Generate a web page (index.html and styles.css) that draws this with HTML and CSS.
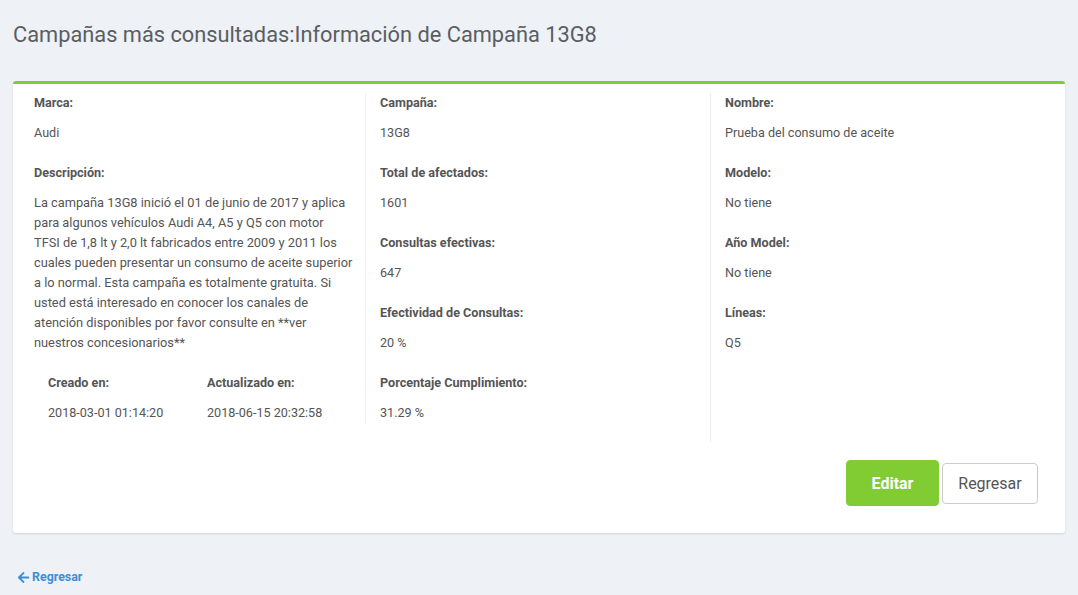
FILE: index.html
```html
<!DOCTYPE html>
<html lang="es">
<head>
<meta charset="utf-8">
<title>Información de Campaña 13G8</title>
<link rel="stylesheet" href="styles.css">
</head>
<body>
<div class="page">
  <h1 class="page-title">Campañas más consultadas:Información de Campaña 13G8</h1>
  <div class="card">
    <div class="row">
      <div class="col col-1">
        <div class="field">
          <div class="label">Marca:</div>
          <div class="value">Audi</div>
        </div>
        <div class="field">
          <div class="label">Descripción:</div>
          <div class="value description">La campaña 13G8 inició el 01 de junio de 2017 y aplica<br>
para algunos vehículos Audi A4, A5 y Q5 con motor<br>
TFSI de 1,8 lt y 2,0 lt fabricados entre 2009 y 2011 los<br>
cuales pueden presentar un consumo de aceite superior<br>
a lo normal. Esta campaña es totalmente gratuita. Si<br>
usted está interesado en conocer los canales de<br>
atención disponibles por favor consulte en **ver<br>
nuestros concesionarios**</div>
        </div>
        <div class="subrow">
          <div class="subcol">
            <div class="label">Creado en:</div>
            <div class="value">2018-03-01 01:14:20</div>
          </div>
          <div class="subcol">
            <div class="label">Actualizado en:</div>
            <div class="value">2018-06-15 20:32:58</div>
          </div>
        </div>
      </div>
      <div class="col col-2 bordered">
        <div class="field">
          <div class="label">Campaña:</div>
          <div class="value">13G8</div>
        </div>
        <div class="field">
          <div class="label">Total de afectados:</div>
          <div class="value">1601</div>
        </div>
        <div class="field">
          <div class="label">Consultas efectivas:</div>
          <div class="value">647</div>
        </div>
        <div class="field">
          <div class="label">Efectividad de Consultas:</div>
          <div class="value">20 %</div>
        </div>
        <div class="field last">
          <div class="label">Porcentaje Cumplimiento:</div>
          <div class="value">31.29 %</div>
        </div>
      </div>
      <div class="col col-3 bordered">
        <div class="field">
          <div class="label">Nombre:</div>
          <div class="value">Prueba del consumo de aceite</div>
        </div>
        <div class="field">
          <div class="label">Modelo:</div>
          <div class="value">No tiene</div>
        </div>
        <div class="field">
          <div class="label">Año Model:</div>
          <div class="value">No tiene</div>
        </div>
        <div class="field">
          <div class="label">Líneas:</div>
          <div class="value">Q5</div>
        </div>
      </div>
    </div>
    <div class="actions">
      <button class="btn btn-primary" type="button">Editar</button>
      <button class="btn btn-default" type="button">Regresar</button>
    </div>
  </div>
  <a class="back-link" href="#">
    <svg class="back-icon" viewBox="0 0 448 512" width="13" height="13" aria-hidden="true"><path fill="currentColor" d="M257.5 445.1l-22.2 22.2c-9.4 9.4-24.6 9.4-33.9 0L7 273c-9.4-9.4-9.4-24.6 0-33.9L201.4 44.7c9.4-9.4 24.6-9.4 33.9 0l22.2 22.2c9.5 9.5 9.3 25-.4 34.3L136.6 216H424c13.3 0 24 10.7 24 24v32c0 13.3-10.7 24-24 24H136.6l120.5 114.8c9.8 9.3 10 24.8.4 34.3z"/></svg>Regresar
  </a>
</div>
</body>
</html>
```

FILE: styles.css
```css
* {
  box-sizing: border-box;
}

html, body {
  margin: 0;
  padding: 0;
}

body {
  background: #eef1f5;
  font-family: Roboto, "Liberation Sans", Arial, sans-serif;
  color: #555;
  font-size: 12.6px;
  line-height: 20px;
}

.page {
  padding: 0 13px 0 13px;
}

.page-title {
  margin: 0;
  padding: 22px 0 0 0;
  height: 81px;
  font-size: 21.8px;
  line-height: 26px;
  font-weight: 400;
  color: #5a5e63;
}

.card {
  width: 1052px;
  background: #fff;
  border-top: 3px solid #82cc33;
  border-radius: 3px;
  box-shadow: 0 1px 2px rgba(0, 0, 0, 0.12);
  padding: 9px 10px 27px 7px;
}

.row {
  display: flex;
  align-items: flex-start;
}

.col {
  width: 345px;
  padding: 0 15px;
}

.col-1 {
  padding-left: 14px;
  padding-right: 10px;
}

.col-2 {
  padding-left: 14px;
}

.col-3 {
  padding-left: 14px;
  min-height: 349px;
}

.bordered {
  border-left: 1px solid #eeeeee;
}

.label {
  font-weight: 700;
  color: #555;
  margin-bottom: 10px;
}

.value {
  color: #555;
}

.description {
  font-size: 12.8px;
  white-space: nowrap;
}

.field {
  margin-bottom: 20px;
}

.field.last {
  margin-bottom: 0;
}

.subrow {
  display: flex;
}

.subcol {
  width: 158px;
  padding-left: 14px;
}

.subcol + .subcol {
  padding-left: 15px;
}

.actions {
  display: flex;
  justify-content: flex-end;
  align-items: center;
  gap: 3px;
  margin-top: 18px;
  padding-right: 17px;
}

.btn {
  font-family: Roboto, "Liberation Sans", Arial, sans-serif;
  font-size: 16px;
  border-radius: 4px;
  cursor: pointer;
}

.btn-primary {
  width: 93px;
  height: 46px;
  background: #82cc33;
  border: 1px solid #82cc33;
  color: #fff;
  font-weight: 700;
}

.btn-default {
  width: 96px;
  height: 41px;
  background: #fff;
  border: 1px solid #ccc;
  color: #555;
  font-weight: 400;
}

.back-link {
  display: inline-flex;
  align-items: center;
  gap: 2px;
  margin-top: 34px;
  margin-left: 4px;
  color: #3a8fd9;
  font-weight: 700;
  font-size: 12.4px;
  text-decoration: none;
}

.back-icon {
  display: block;
}
```
